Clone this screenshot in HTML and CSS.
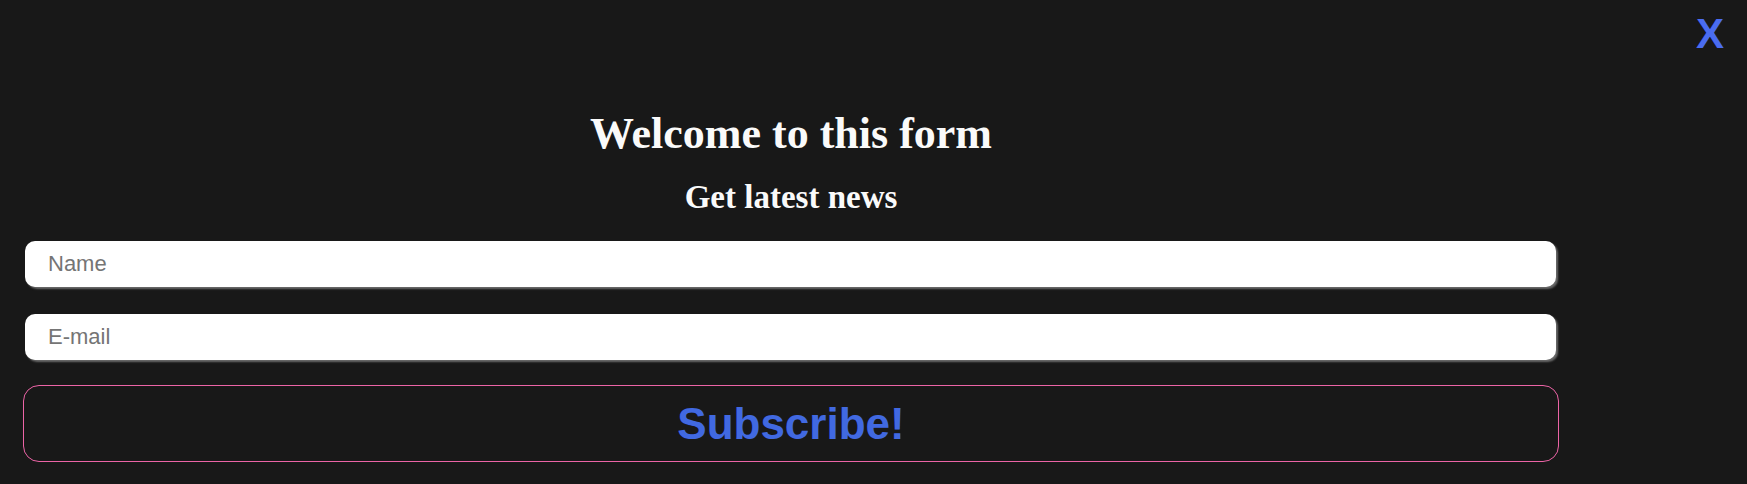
FILE: index.html
```html
<!DOCTYPE html>
<html lang="en">
<head>
<meta charset="utf-8">
<title>Welcome to this form</title>
<link rel="stylesheet" href="styles.css">
</head>
<body>
<button class="close" type="button">X</button>
<form class="form">
  <h1 class="title">Welcome to this form</h1>
  <h2 class="subtitle">Get latest news</h2>
  <input class="field" type="text" placeholder="Name">
  <input class="field" type="email" placeholder="E-mail">
  <button class="submit" type="button">Subscribe!</button>
</form>
</body>
</html>
```
FILE: styles.css
```css
html, body {
  margin: 0;
  padding: 0;
  background: #181818;
}

body {
  position: relative;
  height: 484px;
  overflow: hidden;
  font-family: "Liberation Serif", "Times New Roman", serif;
}

.close {
  position: absolute;
  top: 10px;
  right: 23px;
  margin: 0;
  padding: 0;
  border: none;
  background: transparent;
  color: #4a6cf0;
  font-family: "Liberation Sans", Arial, sans-serif;
  font-weight: bold;
  font-size: 42px;
  line-height: normal;
  cursor: pointer;
}

.form {
  display: flex;
  flex-direction: column;
  width: 1536px;
  margin-left: 23px;
  padding-top: 108px;
}

.title {
  margin: 0 0 20px;
  text-align: center;
  color: #fafafa;
  font-size: 44px;
  font-weight: bold;
  line-height: normal;
}

.subtitle {
  margin: 0 0 25px;
  text-align: center;
  color: #fafafa;
  font-size: 33px;
  font-weight: bold;
  line-height: normal;
}

.field {
  box-sizing: border-box;
  width: 1531px;
  margin: 0 0 27px 2px;
  height: 46px;
  padding: 0 0 0 23px;
  border: none;
  border-radius: 10px;
  background: #fff;
  box-shadow: 2px 2px 2px #6a6a6a;
  font-family: "Liberation Sans", Arial, sans-serif;
  font-size: 22px;
  color: #222;
  outline: none;
}

.field::placeholder {
  color: #757575;
}

.field + .field {
  margin-bottom: 25px;
}

.submit {
  box-sizing: border-box;
  width: 1536px;
  height: 77px;
  margin: 0;
  padding: 0;
  border: 1px solid #ec64a6;
  border-radius: 16px;
  background: transparent;
  color: #4169e1;
  font-family: "Liberation Sans", Arial, sans-serif;
  font-weight: bold;
  font-size: 44px;
  line-height: normal;
  cursor: pointer;
}
```
